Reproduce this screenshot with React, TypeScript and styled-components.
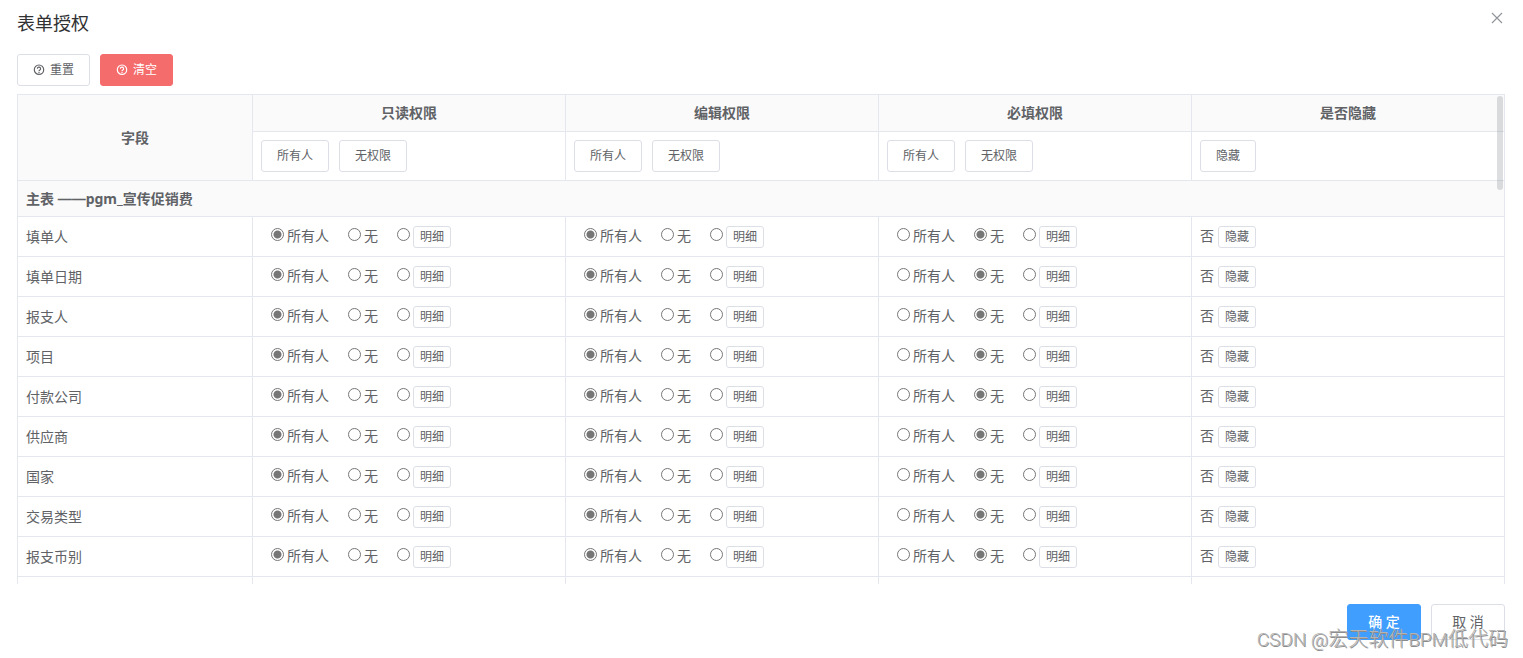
import React, { useState } from "react";
import styled, { createGlobalStyle, css } from "styled-components";

const GlobalStyle = createGlobalStyle`
  * { box-sizing: border-box; }
  body {
    margin: 0;
    background: #fff;
    color: #606266;
    font-family: "Noto Sans", "Noto Sans CJK SC", sans-serif;
    font-size: 14px;
  }
  button, input { font-family: inherit; }
`;

const Dialog = styled.section`
  position: relative;
  display: flex;
  flex-direction: column;
  height: 100vh;
  padding: 0 18px 18px 17px;
`;

const Header = styled.header`
  display: flex;
  justify-content: space-between;
  align-items: flex-start;
  height: 54px;
  padding-top: 10px;
`;

const Title = styled.h1`
  margin: 0;
  font-size: 18px;
  line-height: 26px;
  font-weight: 400;
  color: #303133;
`;

const CloseButton = styled.button`
  display: flex;
  width: 16px;
  height: 16px;
  padding: 0;
  border: 0;
  background: transparent;
  color: #909399;
  cursor: pointer;
`;

const Toolbar = styled.div`
  display: flex;
  gap: 10px;
  padding-bottom: 8px;
`;

type Size = "mini" | "small" | "medium";
type Tone = "plain" | "danger" | "primary";

const sizes = {
  mini: css`height: 22px; padding: 0 6px; font-size: 12px;`,
  small: css`height: 32px; padding: 0 15px; font-size: 12px;`,
  medium: css`height: 36px; min-width: 74px; padding: 0 20px; font-size: 14px;`,
};

const tones = {
  plain: css`background: #fff; border-color: #dcdfe6; color: #606266;`,
  danger: css`background: #f56c6c; border-color: #f56c6c; color: #fff;`,
  primary: css`background: #409eff; border-color: #409eff; color: #fff; font-weight: 500;`,
};

const Button = styled.button<{ $size?: Size; $tone?: Tone }>`
  display: inline-flex;
  align-items: center;
  justify-content: center;
  gap: 5px;
  border: 1px solid;
  border-radius: 3px;
  line-height: 16px;
  white-space: pre;
  cursor: pointer;
  ${(p) => sizes[p.$size ?? "small"]}
  ${(p) => tones[p.$tone ?? "plain"]}
`;

const TableFrame = styled.div`
  position: relative;
  display: flex;
  flex: 1;
  min-height: 0;
`;

const TableScroll = styled.div`
  flex: 1;
  overflow: auto;
  scrollbar-width: none;
`;

const ScrollThumb = styled.div`
  position: absolute;
  top: 2px;
  right: 2px;
  width: 6px;
  height: 94px;
  border-radius: 3px;
  background: rgba(144, 147, 153, 0.3);
`;

const Table = styled.table`
  width: 100%;
  table-layout: fixed;
  border-collapse: collapse;
  line-height: 20px;
`;

const FieldCol = styled.col`
  width: 235px;
`;

const HeadCell = styled.th`
  height: 37px;
  padding: 0 8px;
  border: 1px solid #e4e7ed;
  background: #fafafa;
  font-weight: 700;
`;

const SectionCell = styled(HeadCell)`
  height: 36px;
  text-align: left;
`;

const Dash = styled.span`
  font-family: "Liberation Sans", sans-serif;
  line-height: 16px;
`;

const Cell = styled.td<{ $tall?: boolean }>`
  height: ${(p) => (p.$tall ? 49 : 40)}px;
  padding: 0 8px;
  border: 1px solid #e4e7ed;
`;

const FieldCell = styled.th`
  height: 40px;
  padding: 0 8px;
  border: 1px solid #e4e7ed;
  font-weight: 400;
  text-align: left;
`;

const ButtonRow = styled.div`
  display: flex;
  gap: 10px;
`;

const RadioRow = styled.div`
  display: flex;
  align-items: center;
  gap: 19px;
  padding-left: 10px;
`;

const Option = styled.div`
  display: flex;
  align-items: center;
  gap: 3px;
`;

const OptionLabel = styled.label`
  padding-bottom: 2px;
`;

const HiddenRow = styled.div`
  display: flex;
  align-items: center;
  gap: 4px;
`;

const HiddenState = styled.span`
  padding-bottom: 2px;
`;

const Radio = styled.input`
  appearance: none;
  width: 13px;
  height: 13px;
  margin: 0 0 4px;
  border: 1px solid #767676;
  border-radius: 50%;
  background: #fff;
  &:checked {
    background: radial-gradient(circle, #767676 0 3.5px, #fff 4.5px);
  }
`;

const Footer = styled.footer`
  display: flex;
  justify-content: flex-end;
  gap: 10px;
  padding-top: 20px;
`;

const Watermark = styled.div`
  position: absolute;
  right: 15px;
  bottom: 6px;
  font-family: Roboto, "Noto Sans CJK SC", sans-serif;
  font-size: 20px;
  font-weight: 300;
  line-height: 24px;
  color: #b4b4b4;
  text-shadow: 1px 1px 0 #8c8c8c;
  pointer-events: none;
`;

const Latin = styled.span`
  font-size: 19px;
`;

const QuestionIcon = () => (
  <svg width="12" height="12" viewBox="0 0 12 12" fill="none" stroke="currentColor" strokeWidth="1.2" aria-hidden="true">
    <circle cx="6" cy="5.7" r="4.7" />
    <path d="M4.4 4.8a1.6 1.6 0 1 1 2.4 1.3Q6 6.5 6 7.1" />
    <path d="M6 7.7v1.2" />
  </svg>
);

const CloseIcon = () => (
  <svg width="16" height="16" viewBox="0 0 16 16" fill="none" stroke="currentColor" strokeWidth="1.1" aria-hidden="true">
    <path d="M3 3l10 10M13 3L3 13" />
  </svg>
);

const permissions = [
  { key: "read", label: "只读权限", initial: "all" },
  { key: "edit", label: "编辑权限", initial: "all" },
  { key: "required", label: "必填权限", initial: "none" },
];

const fields = ["填单人", "填单日期", "报支人", "项目", "付款公司", "供应商", "国家", "交易类型", "报支币别"];

function PermissionCell({ name, initial }: { name: string; initial: string }) {
  const [value, setValue] = useState(initial);
  const radio = (option: string, labelledBy?: string) => (
    <Radio
      type="radio"
      id={`${name}-${option}`}
      name={name}
      aria-labelledby={labelledBy}
      checked={value === option}
      onChange={() => setValue(option)}
    />
  );
  return (
    <Cell>
      <RadioRow>
        <Option>
          {radio("all")}
          <OptionLabel htmlFor={`${name}-all`}>所有人</OptionLabel>
        </Option>
        <Option>
          {radio("none")}
          <OptionLabel htmlFor={`${name}-none`}>无</OptionLabel>
        </Option>
        <Option>
          {radio("detail", `${name}-detail-button`)}
          <Button type="button" id={`${name}-detail-button`} $size="mini" onClick={() => setValue("detail")}>
            明细
          </Button>
        </Option>
      </RadioRow>
    </Cell>
  );
}

export default function App() {
  return (
    <>
      <GlobalStyle />
      <Dialog role="dialog" aria-labelledby="dialog-title">
        <Header>
          <Title id="dialog-title">表单授权</Title>
          <CloseButton type="button" aria-label="Close"><CloseIcon /></CloseButton>
        </Header>
        <Toolbar>
          <Button type="button"><QuestionIcon />重置</Button>
          <Button type="button" $tone="danger"><QuestionIcon />清空</Button>
        </Toolbar>
        <TableFrame>
          <TableScroll>
            <Table>
              <colgroup>
                <FieldCol />
                <col span={4} />
              </colgroup>
              <thead>
                <tr>
                  <HeadCell rowSpan={2}>字段</HeadCell>
                  {permissions.map((p) => <HeadCell key={p.key}>{p.label}</HeadCell>)}
                  <HeadCell>是否隐藏</HeadCell>
                </tr>
                <tr>
                  {permissions.map((p) => (
                    <Cell key={p.key} $tall>
                      <ButtonRow>
                        <Button type="button">所有人</Button>
                        <Button type="button">无权限</Button>
                      </ButtonRow>
                    </Cell>
                  ))}
                  <Cell $tall><ButtonRow><Button type="button">隐藏</Button></ButtonRow></Cell>
                </tr>
              </thead>
              <tbody>
                <tr>
                  <SectionCell colSpan={5}>主表 <Dash>——</Dash>pgm_宣传促销费</SectionCell>
                </tr>
                {fields.map((field, i) => (
                  <tr key={field}>
                    <FieldCell scope="row">{field}</FieldCell>
                    {permissions.map((p) => (
                      <PermissionCell key={p.key} name={`${p.key}-${i}`} initial={p.initial} />
                    ))}
                    <Cell>
                      <HiddenRow>
                        <HiddenState>否</HiddenState>
                        <Button type="button" $size="mini">隐藏</Button>
                      </HiddenRow>
                    </Cell>
                  </tr>
                ))}
                <tr>
                  <Cell /><Cell /><Cell /><Cell /><Cell />
                </tr>
              </tbody>
            </Table>
          </TableScroll>
          <ScrollThumb />
        </TableFrame>
        <Footer>
          <Button type="button" $size="medium" $tone="primary">确 定</Button>
          <Button type="button" $size="medium">取 消</Button>
        </Footer>
        <Watermark><Latin>CSDN @</Latin>宏天软件<Latin>BPM</Latin>低代码</Watermark>
      </Dialog>
    </>
  );
}
